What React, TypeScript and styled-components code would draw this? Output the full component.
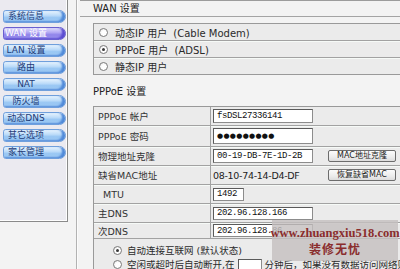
import React from 'react';
import styled, { createGlobalStyle } from 'styled-components';

const Global = createGlobalStyle`
  html, body { margin: 0; padding: 0; background: #f3f3f3; width: 400px; height: 269px; overflow: hidden; }
  #root { width: 400px; height: 269px; }
`;

const Page = styled.div`
  position: relative;
  display: flex;
  width: 400px;
  height: 269px;
  overflow: hidden;
  font-family: "DejaVu Sans", "Noto Sans CJK SC", sans-serif;
  font-size: 9.5px;
  color: #2a2a2a;
`;

const SideCol = styled.div`
  flex: none;
  width: 76px;
  border-right: 1px solid #b2b2b2;
  box-shadow: 1px 0 0 #fbfbfb;
`;

const Menu = styled.nav`
  box-sizing: border-box;
  width: 68px;
  height: 222px;
  padding: 10px 0 0 3px;
  display: flex;
  flex-direction: column;
  gap: 4px;
  background: #ebeaf0;
  border-right: 1px solid #8a8a8a;
  border-bottom: 1px solid #8a8a8a;
  box-shadow: inset -1px -1px 0 #fdfdfd;
`;

const MenuItem = styled.div<{ $active?: boolean }>`
  box-sizing: border-box;
  width: 63px;
  height: 13px;
  padding-right: 17px;
  border-radius: 3px 7px 7px 3px;
  border: 1px solid ${p => (p.$active ? '#6a5fd0' : '#6f9fdc')};
  background: ${p =>
    p.$active
      ? 'linear-gradient(to bottom, #e0dbfc 0%, #b4aaf4 40%, #8f83ea 62%, #a69df2 100%)'
      : 'linear-gradient(to bottom, #e6f3fe 0%, #bddcf9 40%, #96c5f3 62%, #acd3f7 100%)'};
  box-shadow: inset -3px -1px 2px ${p => (p.$active ? '#5a4cd0' : '#4f88d8')};
  color: ${p => (p.$active ? '#ffffff' : '#1f3c78')};
  font-size: 9px;
  line-height: 11px;
  text-align: center;
  white-space: nowrap;
`;

const Main = styled.main`
  flex: 1;
  margin-left: 3px;
  border-top: 1px solid #9c9c9c;
  display: flex;
  flex-direction: column;
`;

const SectionTitle = styled.div<{ $line?: boolean }>`
  height: 15px;
  line-height: 15px;
  padding-left: 13px;
  font-size: 10px;
  color: #222;
  border-bottom: ${p => (p.$line ? '1px solid #a4a4a4' : 'none')};
`;

const Box = styled.div<{ $top: number }>`
  margin: ${p => p.$top}px 0 0 13px;
  border: 1px solid #999;
  border-right: none;
  background: #ebebeb;
`;

const OptionRow = styled.div`
  height: 16px;
  display: flex;
  align-items: center;
  gap: 7px;
  padding-left: 5px;
  font-size: 10px;
  white-space: nowrap;
  & + & {
    border-top: 1px solid #a2a2a2;
    box-shadow: inset 0 1px 0 #f6faf7;
  }
`;

const Radio = styled.span<{ $checked?: boolean }>`
  position: relative;
  flex: none;
  box-sizing: border-box;
  width: 9px;
  height: 9px;
  border-radius: 50%;
  border: 1px solid #7c7c7c;
  background: radial-gradient(circle at 60% 60%, #ffffff 40%, #e2e2e2 100%);
  &::after {
    content: '';
    display: ${p => (p.$checked ? 'block' : 'none')};
    position: absolute;
    left: 2px;
    top: 2px;
    width: 3px;
    height: 3px;
    border-radius: 50%;
    background: #3a3a3a;
  }
`;

const Hint = styled.span`
  margin-left: 3px;
`;

const Row = styled.div<{ $h: number }>`
  display: grid;
  grid-template-columns: 117px 1fr;
  height: ${p => p.$h}px;
  & + & {
    border-top: 1px solid #a2a2a2;
    box-shadow: inset 0 1px 0 #f6faf7;
  }
`;

const Label = styled.div<{ $indent?: number }>`
  display: flex;
  align-items: center;
  padding-left: ${p => 4 + (p.$indent || 0)}px;
  border-right: 1px solid #a2a2a2;
  font-size: 9.5px;
  color: #333;
  white-space: nowrap;
`;

const Value = styled.div`
  display: grid;
  grid-template-columns: 115px 68px;
  align-items: center;
  padding-left: 2px;
`;

const Field = styled.div<{ $w: number; $h: number }>`
  box-sizing: border-box;
  width: ${p => p.$w}px;
  height: ${p => p.$h}px;
  display: flex;
  align-items: center;
  padding-left: 3px;
  background: #fff;
  border: 1px solid #8c8c8c;
  border-top-color: #5a5a5a;
  border-left-color: #5a5a5a;
  font-family: "Liberation Mono", "DejaVu Sans Mono", monospace;
  font-size: 9px;
  letter-spacing: -0.4px;
  color: #111;
  white-space: nowrap;
  overflow: hidden;
`;

const Dots = styled.span`
  font-family: "DejaVu Sans", sans-serif;
  font-size: 7px;
  letter-spacing: 0.3px;
  color: #111;
`;

const PlainValue = styled.span`
  font-family: "DejaVu Sans", sans-serif;
  font-size: 9.5px;
  letter-spacing: -0.3px;
  color: #222;
`;

const Btn = styled.button`
  box-sizing: border-box;
  width: 68px;
  height: 12px;
  padding: 0;
  border: 1px solid #6c6c6c;
  border-radius: 2px;
  background: linear-gradient(to bottom, #fbfbfb 0%, #ececec 60%, #dcdcdc 100%);
  font-family: "DejaVu Sans", "Noto Sans CJK SC", sans-serif;
  font-size: 8px;
  line-height: 10px;
  color: #222;
  white-space: nowrap;
`;

const Options = styled.div`
  border-top: 1px solid #a2a2a2;
  padding: 4px 0 0 19px;
  display: flex;
  flex-direction: column;
`;

const OptLine = styled.div`
  height: 14px;
  display: flex;
  align-items: center;
  gap: 5px;
  font-size: 9.5px;
  white-space: nowrap;
`;

const SmallField = styled.span`
  box-sizing: border-box;
  display: inline-block;
  width: 24px;
  height: 12px;
  margin: 0 3px;
  vertical-align: middle;
  background: #fff;
  border: 1px solid #8c8c8c;
  border-top-color: #5a5a5a;
  border-left-color: #5a5a5a;
`;

const Watermark = styled.div`
  position: absolute;
  left: 272px;
  top: 220px;
  width: 126px;
  height: 41px;
  background: rgba(196, 192, 192, 0.82);
  display: flex;
  flex-direction: column;
  align-items: center;
  justify-content: center;
  color: #8a2d2d;
  font-weight: bold;
`;

const WmUrl = styled.div`
  font-family: "Liberation Serif", "DejaVu Serif", serif;
  font-size: 12.5px;
  line-height: 16px;
`;

const WmName = styled.div`
  font-family: "Noto Sans CJK SC", sans-serif;
  font-size: 12px;
  line-height: 16px;
  letter-spacing: 1px;
`;

const menu = ['系统信息', 'WAN 设置', 'LAN 设置', '路由', 'NAT', '防火墙', '动态DNS', '其它选项', '家长管理'];

export default function App() {
  return (
    <>
      <Global />
      <Page>
        <SideCol>
          <Menu>
            {menu.map(m => (
              <MenuItem key={m} $active={m === 'WAN 设置'}>
                {m}
              </MenuItem>
            ))}
          </Menu>
        </SideCol>
        <Main>
          <SectionTitle $line>WAN 设置</SectionTitle>
          <Box $top={6}>
            <OptionRow>
              <Radio />
              <span>
                动态IP 用户<Hint> (Cable Modem)</Hint>
              </span>
            </OptionRow>
            <OptionRow>
              <Radio $checked />
              <span>
                PPPoE 用户<Hint> (ADSL)</Hint>
              </span>
            </OptionRow>
            <OptionRow>
              <Radio />
              <span>静态IP 用户</span>
            </OptionRow>
          </Box>
          <SectionTitle style={{ marginTop: 9 }}>PPPoE 设置</SectionTitle>
          <Box $top={7}>
            <Row $h={18}>
              <Label>PPPoE 帐户</Label>
              <Value>
                <Field $w={100} $h={14}>fsDSL27336141</Field>
              </Value>
            </Row>
            <Row $h={20}>
              <Label>PPPoE 密码</Label>
              <Value>
                <Field $w={100} $h={16}>
                  <Dots>●●●●●●●●●</Dots>
                </Field>
              </Value>
            </Row>
            <Row $h={18}>
              <Label>物理地址克隆</Label>
              <Value>
                <Field $w={100} $h={14}>00-19-DB-7E-1D-2B</Field>
                <Btn>MAC地址克隆</Btn>
              </Value>
            </Row>
            <Row $h={18}>
              <Label>缺省MAC地址</Label>
              <Value>
                <PlainValue>08-10-74-14-D4-DF</PlainValue>
                <Btn>恢复缺省MAC</Btn>
              </Value>
            </Row>
            <Row $h={18}>
              <Label $indent={5}>MTU</Label>
              <Value>
                <Field $w={31} $h={13}>1492</Field>
              </Value>
            </Row>
            <Row $h={18}>
              <Label>主DNS</Label>
              <Value>
                <Field $w={100} $h={13}>202.96.128.166</Field>
              </Value>
            </Row>
            <Row $h={15}>
              <Label>次DNS</Label>
              <Value>
                <Field $w={100} $h={13}>202.96.128.86</Field>
              </Value>
            </Row>
            <Options>
              <OptLine>
                <Radio $checked />
                <span>自动连接互联网 (默认状态)</span>
              </OptLine>
              <OptLine>
                <Radio />
                <span>
                  空闲或超时后自动断开,在<SmallField />分钟后，如果没有数据访问网络则自动断开
                </span>
              </OptLine>
            </Options>
          </Box>
        </Main>
        <Watermark>
          <WmUrl>www.zhuangxiu518.com</WmUrl>
          <WmName>装修无忧</WmName>
        </Watermark>
      </Page>
    </>
  );
}
